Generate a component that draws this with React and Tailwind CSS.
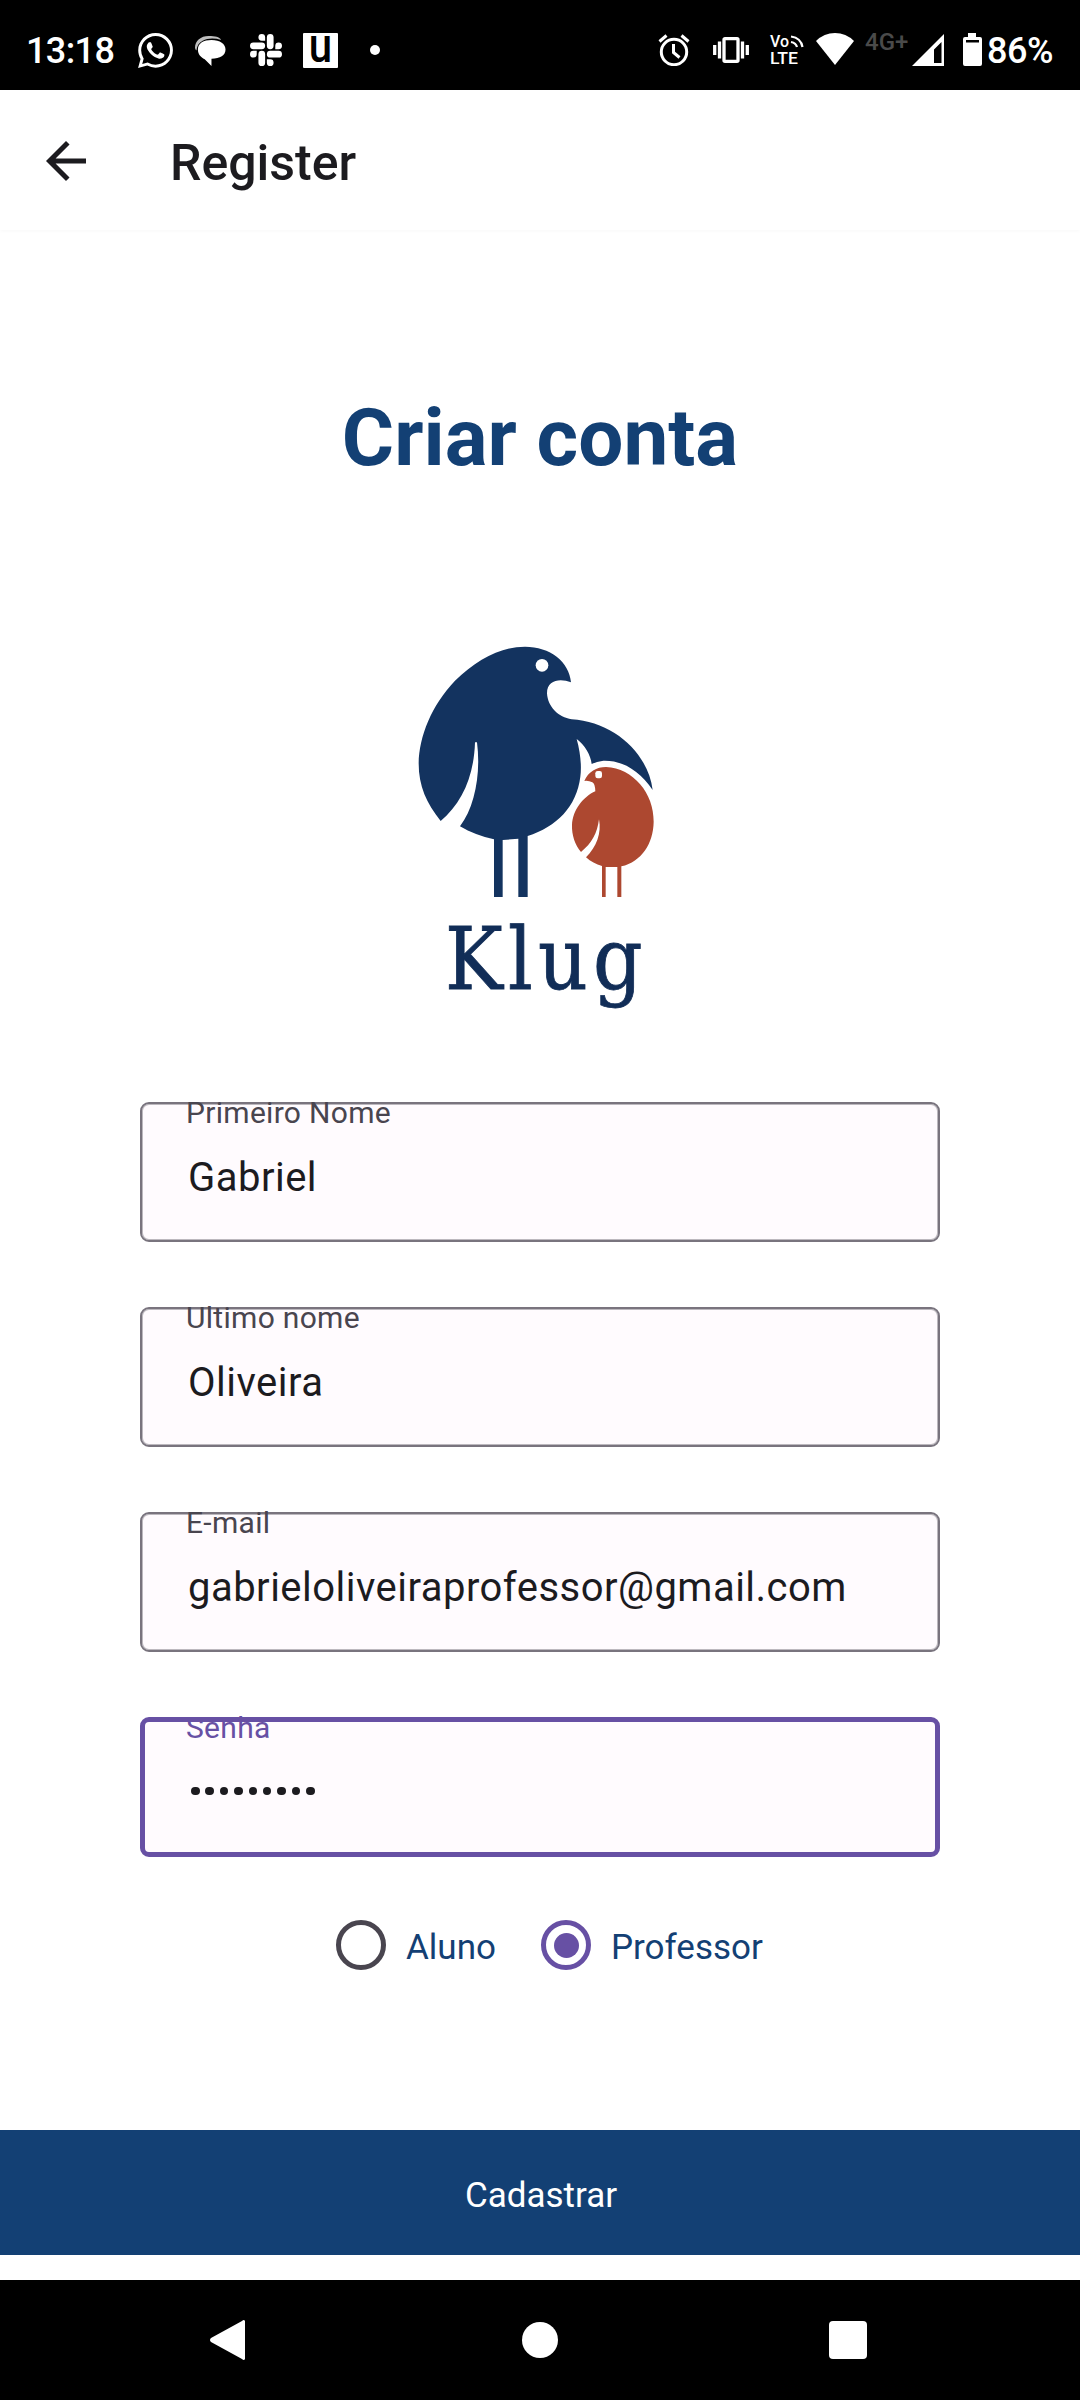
import { SiWhatsapp, SiSlack } from "react-icons/si";
import { MdArrowBack } from "react-icons/md";

function StatusBar() {
  return (
    <div className="flex h-[90px] shrink-0 items-center bg-black pl-[26px] pr-[27px] pt-[10px] text-white">
      <span className="mt-[2px] w-[112px] text-[36px] font-medium leading-[40px] tracking-[-0.6px]">13:18</span>
      <SiWhatsapp className="mt-[1px] h-[35px] w-[35px]" />
      <svg className="ml-[22px] mt-[2px] h-[31px] w-[31px]" viewBox="0 0 32 32" fill="currentColor">
        <path d="M0 12C0 5 6 0 14 0C21 0 25 1 27 4C20 2 13 2 8 5C4 7 2 10 1.500 15C.5 14 0 13 0 12Z" opacity=".75" />
        <path d="M3 14C3 7 9 4 17 4C26 4 31.500 8 31.500 14C31.500 20 26 23.500 17 23.500V31L10 24C6 22 3 19 3 14Z" />
      </svg>
      <SiSlack className="ml-[24px] h-[32px] w-[32px]" />
      <span className="ml-[21px] mt-[1px] flex h-[35px] w-[35px] items-center justify-center rounded-[1px] bg-white text-black">
        <span className="-mt-[9px] scale-y-[1.15] text-[42px] font-medium leading-[42px]">u</span>
      </span>
      <span className="ml-[32px] h-[10px] w-[10px] rounded-full bg-white" />
      <div className="ml-auto flex items-center">
        <svg className="-mt-[1px] h-[32px] w-[32px]" viewBox="0 0 32 32" fill="none" stroke="currentColor" strokeWidth="3">
          <circle cx="16" cy="18" r="12.700" />
          <path d="M1.500 7.500L8.500 1.500M23.500 1.500L30.500 7.500M15.500 10V18.500L21.500 23.500" />
        </svg>
        <svg className="ml-[23px] h-[26px] w-[36px]" viewBox="0 0 36 26" fill="none" stroke="currentColor" strokeWidth="3.300">
          <rect x="11" y="1.700" width="14" height="22.600" rx="1" />
          <path d="M1.700 8V18M6.500 4.500V21.500M29.500 4.500V21.500M34.300 8V18" />
        </svg>
        <svg className="ml-[20px] h-[34px] w-[36px] overflow-visible" viewBox="0 0 36 34" fill="currentColor">
          <text x="1" y="14" fontSize="16" fontWeight="500" fontFamily="Roboto, sans-serif" textLength="19" lengthAdjust="spacingAndGlyphs">Vo</text>
          <text x="1" y="31" fontSize="16" fontWeight="500" fontFamily="Roboto, sans-serif" textLength="28" lengthAdjust="spacingAndGlyphs">LTE</text>
          <path d="M22 9Q27 10 28 14M22 3.500Q32 5 33.500 14" fill="none" stroke="currentColor" strokeWidth="2.200" />
        </svg>
        <svg className="-mt-[2px] ml-[11px] h-[32px] w-[38px]" viewBox="0 0 38 32" fill="currentColor">
          <path d="M0 8Q8 0 19 0T38 8L19 32Z" />
        </svg>
        <span className="-mt-[16px] ml-[11px] w-[47px] text-[24px] font-medium leading-[24px] text-[#4a4a4a]">4G+</span>
        <svg className="-mt-[1px] h-[32px] w-[32px]" viewBox="0 0 32 32" fill="currentColor">
          <path fillRule="evenodd" d="M32 0V32H0ZM29.500 8L22 15.500V29H29.500Z" />
        </svg>
        <svg className="-mt-[1px] ml-[19px] h-[33px] w-[19px]" viewBox="0 0 19 33" fill="currentColor">
          <path fillRule="evenodd" d="M5 0H13V4H17Q19 4 19 6V31Q19 33 17 33H2Q0 33 0 31V6Q0 4 2 4H5ZM3 7V9.500H16V7Z" />
        </svg>
        <span className="ml-[5px] mt-[2px] text-[36px] font-medium leading-[40px] tracking-[-0.5px]">86%</span>
      </div>
    </div>
  );
}

function Logo() {
  return (
    <div className="mr-[10px] flex flex-col items-center">
      <svg className="h-[280px] w-[270px]" viewBox="0 0 810 840">
        <path fill="#13335f" d="M122 573C80 520 56 470 56 400C57 320 95 225 165 152C230 90 300 50 375 50C450 50 508 95 513 157C480 144 441 150 441 190C443 230 475 262 515 268C640 275 745 370 758 480C720 425 670 390 610 392Q590 394 575 402C572 375 555 345 530 327C542 370 545 410 541 440C530 530 470 590 383 618V801H355V626L308 630V801H282V628C245 620 210 607 180 589C225 530 243 430 231 337H225C222 440 185 520 122 573Z" />
        <circle cx="426" cy="106" r="19" fill="#fff" />
        <path fill="#ad4830" d="M553 453C565 425 590 411 618 411C700 415 762 490 761 575C760 640 725 695 664 709V801H652V711H617V801H606V708C588 703 572 695 558 682C590 650 605 610 597 568C592 610 575 640 543 666C525 645 515 615 516 585C518 540 550 500 586 484Q585 460 577 457Q565 451 553 453Z" />
        <rect x="586" y="423" width="20" height="22" rx="7" fill="#fff" />
      </svg>
      <div className="mt-[-6px] flex h-[110px] w-[192px] whitespace-nowrap pl-[6px] text-[86px] leading-[110px] tracking-[5.2px] text-[#112d57] [-webkit-text-stroke:0.8px_#112d57] [font-family:'DejaVu_Serif_Condensed','DejaVu_Serif',serif]">
        <span>Klug</span>
      </div>
    </div>
  );
}

function Field({ label, value, focused }) {
  return (
    <div
      className={
        "relative h-[140px] w-[800px] rounded-[9px] bg-[#fffbfe] " +
        (focused ? "border-[5px] border-[#6750a4]" : "border-2 border-[#79747e] shadow-[inset_0_0_0_1px_#bcb8be]")
      }
    >
      <span
        className={
          "absolute text-[30px] leading-[36px] tracking-[0.3px] " +
          (focused ? "-top-[12px] left-[41px] text-[#6750a4]" : "-top-[9px] left-[44px] text-[#49454f]")
        }
      >
        {label}
      </span>
      <span
        className={
          "absolute text-[40px] leading-[48px] tracking-[0.48px] text-[#1c1b1f] " +
          (focused ? "left-[43px] top-[47px]" : "left-[46px] top-[50px]")
        }
      >
        {value}
      </span>
    </div>
  );
}

function PasswordDots() {
  return (
    <span className="ml-[3px] flex h-[44px] items-center gap-[5.9px]">
      {Array.from({ length: 9 }, (_, i) => (
        <span key={i} className="h-[8.5px] w-[8.5px] rounded-full bg-[#1c1b1f]" />
      ))}
    </span>
  );
}

export default function App() {
  return (
    <div className="flex h-[2400px] w-[1080px] flex-col overflow-hidden bg-white [font-family:Roboto,sans-serif]">
      <StatusBar />
      <header className="flex h-[140px] shrink-0 items-center bg-white pl-[36px] pt-[3px] text-[#1c1b1f] shadow-[0_1px_4px_rgba(0,0,0,0.03)]">
        <MdArrowBack className="-mt-[1px] h-[60px] w-[60px]" />
        <h1 className="ml-[74px] mt-[2px] text-[50px] font-medium leading-[60px]">Register</h1>
      </header>
      <main className="flex flex-1 flex-col items-center">
        <h2 className="mt-[161px] text-[80px] font-bold leading-[94px] text-[#134074]">Criar conta</h2>
        <div className="mt-[145px]">
          <Logo />
        </div>
        <div className="mt-[88px] flex flex-col gap-[65px]">
          <Field label="Primeiro Nome" value="Gabriel" />
          <Field label="Ultimo nome" value="Oliveira" />
          <Field label="E-mail" value="gabrieloliveiraprofessor@gmail.com" />
          <Field label="Senha" value={<PasswordDots />} focused />
        </div>
        <div className="mt-[63px] flex h-[50px] w-[800px] items-center pl-[196px] text-[35px] text-[#134074]">
          <span className="h-[50px] w-[50px] rounded-full border-[5px] border-[#49454f]" />
          <span className="ml-[20px] w-[135px] pt-[6px]">Aluno</span>
          <span className="flex h-[50px] w-[50px] items-center justify-center rounded-full border-[5px] border-[#6750a4]">
            <span className="h-[25px] w-[25px] rounded-full bg-[#6750a4]" />
          </span>
          <span className="ml-[20px] pt-[6px]">Professor</span>
        </div>
      </main>
      <button className="mb-[25px] flex h-[125px] shrink-0 items-center justify-center bg-[#134074] pl-[2px] pt-[7px] text-[35px] text-white">
        Cadastrar
      </button>
      <nav className="flex h-[120px] shrink-0 items-center bg-black text-white">
        <svg className="ml-[210px] h-[40px] w-[36px]" viewBox="0 0 36 40" fill="currentColor">
          <path d="M35 1V39Q34 41 32 39L1 22Q-1 20 1 18L32 1Q34-1 35 1Z" />
        </svg>
        <span className="ml-[276px] h-[36px] w-[36px] rounded-full bg-white" />
        <span className="ml-[271px] h-[38px] w-[38px] rounded-[4px] bg-white" />
      </nav>
    </div>
  );
}
